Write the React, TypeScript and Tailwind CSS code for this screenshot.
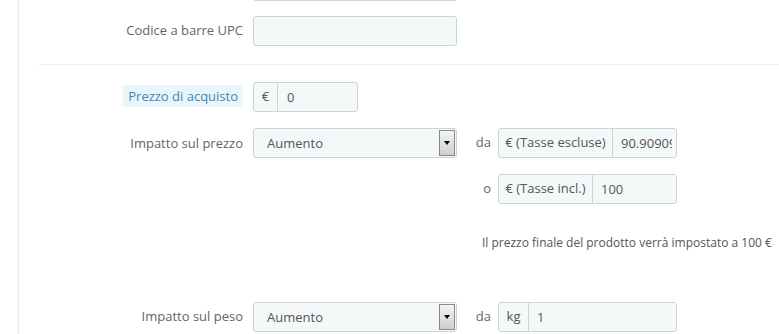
import { ReactNode } from "react";

function Label({ children, hint }: { children: ReactNode; hint?: boolean }) {
  return (
    <div className="w-[234px] shrink-0 pr-[10px] text-right">
      {hint ? (
        <span className="rounded-[3px] bg-[#eaf5fb] px-[5px] py-[2px] text-[#3a8bb4]">{children}</span>
      ) : (
        <span className="text-[#666]">{children}</span>
      )}
    </div>
  );
}

function Addon({ prefix, value, prefixW }: { prefix: string; value: string; prefixW: string }) {
  return (
    <div className="flex h-[30px] w-[179px] overflow-hidden rounded-[3px] border border-[#c7d6db] bg-[#f5f8f9]">
      <div className={`${prefixW} flex shrink-0 items-center justify-center border-r border-[#c7d6db] text-[#555]`}>
        {prefix}
      </div>
      <div className="flex-1 overflow-hidden whitespace-nowrap pl-[8px] pr-[4px] leading-[28px] text-[#555]">
        <div className="overflow-hidden">{value}</div>
      </div>
    </div>
  );
}

function Select({ value }: { value: string }) {
  return (
    <div className="flex h-[30px] w-[204px] shrink-0 items-stretch rounded-[3px] border border-[#c7d6db] bg-[#f5f8f9]">
      <div className="flex-1 pl-[13px] leading-[28px] text-[#555]">{value}</div>
      <div className="my-[1px] mr-[1px] flex w-[16px] items-center justify-center border border-[#8a8a8a] bg-gradient-to-b from-[#f4f4f4] to-[#cfcfcf]">
        <div className="h-0 w-0 border-x-[3.5px] border-t-[4px] border-x-transparent border-t-black" />
      </div>
    </div>
  );
}

export default function App() {
  return (
    <div className="h-[334px] w-[779px] overflow-hidden bg-white font-['Open_Sans',sans-serif] text-[13px]">
      <div className="ml-[18px] h-full overflow-hidden border-l border-[#e8e8e8]">
        <div className="-mt-[29px] flex items-center">
          <Label>{""}</Label>
          <div className="h-[30px] w-[204px] rounded-[3px] border border-[#c7d6db] bg-[#f5f8f9]" />
        </div>

        <div className="mt-[15px] flex items-center">
          <Label>Codice a barre UPC</Label>
          <div className="h-[30px] w-[204px] rounded-[3px] border border-[#c7d6db] bg-[#f5f8f9]" />
        </div>

        <div className="ml-[20px] mt-[18px] border-t border-[#eeeeee]" />

        <div className="mt-[17px] flex items-center">
          <Label hint>Prezzo di acquisto</Label>
          <div className="flex h-[30px] w-[105px] overflow-hidden rounded-[3px] border border-[#c7d6db] bg-[#f5f8f9]">
            <div className="flex w-[24px] shrink-0 items-center justify-center border-r border-[#c7d6db] text-[#555]">€</div>
            <div className="pl-[9px] leading-[28px] text-[#555]">0</div>
          </div>
        </div>

        <div className="mt-[16px] flex items-start">
          <Label>
            <span className="leading-[30px]">Impatto sul prezzo</span>
          </Label>
          <Select value="Aumento" />
          <div className="flex flex-col gap-[16px]">
            <div className="flex items-center">
              <span className="w-[41px] pr-[7px] text-right text-[#666]">da</span>
              <Addon prefix="€ (Tasse escluse)" value="90.909091" prefixW="w-[114px]" />
            </div>
            <div className="flex items-center">
              <span className="w-[41px] pr-[7px] text-right text-[#666]">o</span>
              <Addon prefix="€ (Tasse incl.)" value="100" prefixW="w-[94px]" />
            </div>
          </div>
        </div>

        <div className="ml-[463px] mt-[31px] whitespace-nowrap text-[12px] leading-[16px] text-[#555]">
          Il prezzo finale del prodotto verrà impostato a 100 €
        </div>

        <div className="mt-[51px] flex items-center">
          <Label>Impatto sul peso</Label>
          <Select value="Aumento" />
          <span className="w-[41px] pr-[7px] text-right text-[#666]">da</span>
          <Addon prefix="kg" value="1" prefixW="w-[30px]" />
        </div>
      </div>
    </div>
  );
}
